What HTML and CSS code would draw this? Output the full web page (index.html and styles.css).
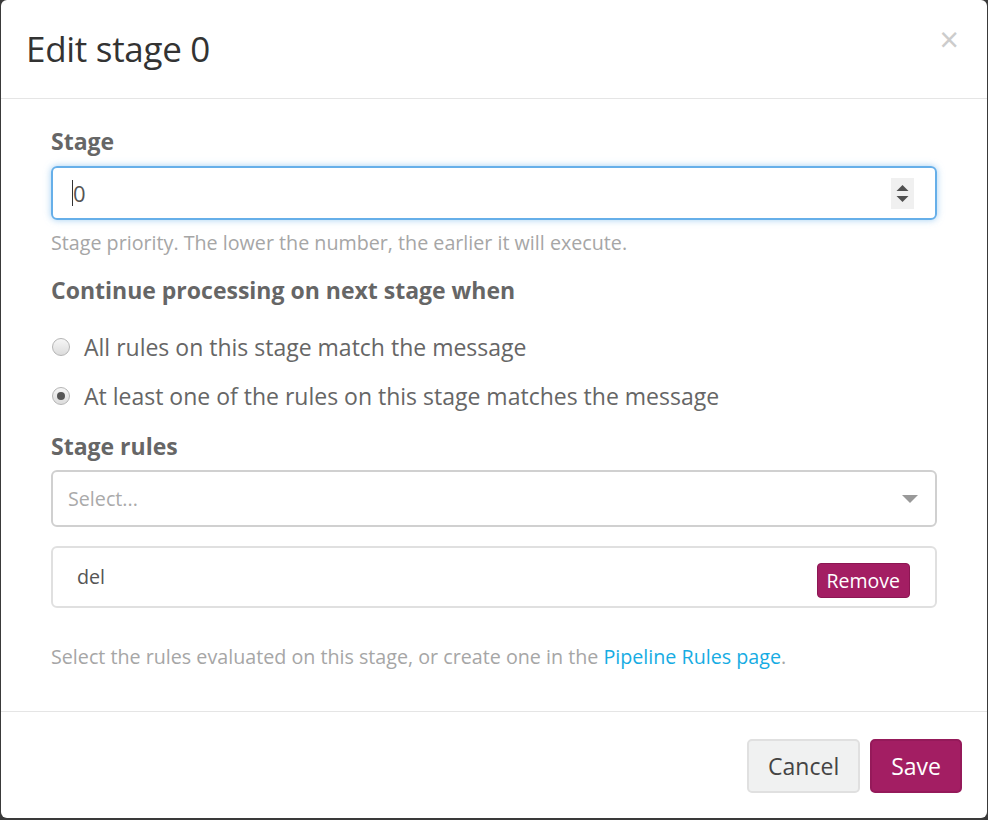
FILE: index.html
```html
<!DOCTYPE html>
<html>
<head>
<meta charset="utf-8">
<link rel="stylesheet" href="styles.css">
</head>
<body>
<div class="modal">
  <div class="modal-header">
    <h4 class="modal-title">Edit stage 0</h4>
    <span class="close">×</span>
  </div>
  <div class="modal-body">
    <div class="label">Stage</div>
    <div class="input focus">
      <span class="caret"></span><span class="value">0</span>
      <span class="spinner">
        <svg width="23" height="31" viewBox="0 0 23 31"><rect width="23" height="31" fill="#f0f0f0"/><path d="M5.5 13 L11.5 7 L17.5 13 Z" fill="#505050"/><path d="M5.5 18 L17.5 18 L11.5 24 Z" fill="#505050"/></svg>
      </span>
    </div>
    <div class="help">Stage priority. The lower the number, the earlier it will execute.</div>
    <div class="label label-continue">Continue processing on next stage when</div>
    <div class="radio first"><span class="radio-dot"></span><span>All rules on this stage match the message</span></div>
    <div class="radio second"><span class="radio-dot checked"></span><span>At least one of the rules on this stage matches the message</span></div>
    <div class="label label-rules">Stage rules</div>
    <div class="select">
      <span class="placeholder">Select...</span>
      <span class="arrow"></span>
    </div>
    <div class="rule">
      <span class="rule-name">del</span>
      <span class="btn-remove">Remove</span>
    </div>
    <div class="help help-rules">Select the rules evaluated on this stage, or create one in the <a class="link">Pipeline Rules page</a>.</div>
  </div>
  <div class="modal-footer">
    <span class="btn btn-default">Cancel</span>
    <span class="btn btn-primary">Save</span>
  </div>
</div>
</body>
</html>
```
FILE: styles.css
```css
html, body {
  margin: 0;
  padding: 0;
}
body {
  background: #3a3a3a;
  width: 988px;
  height: 820px;
  overflow: hidden;
  font-family: "Open Sans", "Noto Sans", sans-serif;
  color: #666;
}
.modal {
  margin-left: 1px;
  width: 986px;
  height: 818px;
  background: #fff;
  border-radius: 6px;
  display: flex;
  flex-direction: column;
}
.modal-header {
  height: 98px;
  border-bottom: 1px solid #e5e5e5;
  padding: 0 25px;
  display: flex;
  justify-content: space-between;
}
.modal-title {
  margin: 0;
  font-weight: 400;
  font-size: 35px;
  line-height: 44px;
  padding-top: 27px;
  color: #333;
  letter-spacing: -0.3px;
}
.close {
  font-size: 34px;
  line-height: 34px;
  color: #cccccc;
  padding-top: 22px;
  margin-right: 3px;
  font-weight: 400;
}
.modal-body {
  padding: 28px 50px 43px 50px;
}
.label {
  font-size: 23px;
  font-weight: 700;
  line-height: 28px;
  color: #666;
}
.input {
  margin-top: 11px;
  height: 54px;
  box-sizing: border-box;
  border: 2px solid #66afe9;
  border-radius: 6px;
  box-shadow: 0 0 7px rgba(102, 175, 233, 0.6);
  display: flex;
  align-items: center;
  padding-left: 19px;
  padding-right: 21px;
  font-size: 22px;
  color: #555;
}
.caret {
  width: 1px;
  height: 26px;
  background: #333;
}
.value {
  flex: 1;
}
.spinner {
  display: flex;
  height: 31px;
}
.help {
  margin-top: 12px;
  font-size: 19.7px;
  line-height: 22px;
  color: #a6a6a6;
}
.label-continue {
  margin-top: 22px;
}
.radio {
  display: flex;
  align-items: center;
  font-size: 23px;
  line-height: 30px;
  color: #666;
}
.radio.first {
  margin-top: 28px;
}
.radio.second {
  margin-top: 19px;
}
.radio-dot {
  width: 16px;
  height: 16px;
  border-radius: 50%;
  border: 1px solid #b5b5b5;
  background: linear-gradient(#f6f6f6, #dcdcdc);
  margin-left: 1px;
  margin-right: 14px;
  position: relative;
  flex: none;
}
.radio-dot.checked::after {
  content: "";
  position: absolute;
  left: 4px;
  top: 4px;
  width: 8px;
  height: 8px;
  border-radius: 50%;
  background: #555;
}
.label-rules {
  margin-top: 21px;
}
.select {
  margin-top: 10px;
  height: 57px;
  box-sizing: border-box;
  border: 2px solid #d0d0d0;
  border-radius: 6px;
  display: flex;
  align-items: center;
  justify-content: space-between;
  padding-left: 15px;
  padding-right: 17px;
}
.placeholder {
  font-size: 19.7px;
  color: #aaa;
}
.arrow {
  width: 0;
  height: 0;
  border-left: 8px solid transparent;
  border-right: 8px solid transparent;
  border-top: 8px solid #999;
}
.rule {
  margin-top: 19px;
  height: 62px;
  box-sizing: border-box;
  border: 2px solid #e0e0e0;
  border-radius: 6px;
  display: flex;
  align-items: center;
  justify-content: space-between;
  padding-left: 24px;
  padding-right: 25px;
}
.rule-name {
  font-size: 19.7px;
  color: #555;
  margin-top: -2px;
}
.btn-remove {
  background: #a31e63;
  border: 1px solid #8c1753;
  color: #fff;
  border-radius: 4px;
  font-size: 19.5px;
  line-height: 33px;
  padding: 0 9px;
  margin-top: 6px;
}
.help-rules {
  margin-top: 38px;
}
.link {
  color: #16ace3;
  text-decoration: none;
}
.modal-footer {
  border-top: 1px solid #e5e5e5;
  padding: 27px 25px 25px 25px;
  display: flex;
  justify-content: flex-end;
  gap: 10px;
}
.btn {
  height: 54px;
  box-sizing: border-box;
  border-radius: 5px;
  font-size: 23px;
  line-height: 50px;
  padding: 0 19px;
}
.btn-default {
  background: #f0f1f1;
  border: 2px solid #e0e0e0;
  color: #444;
}
.btn-primary {
  background: #a31e63;
  border: 2px solid #951a5a;
  color: #fff;
}
```
